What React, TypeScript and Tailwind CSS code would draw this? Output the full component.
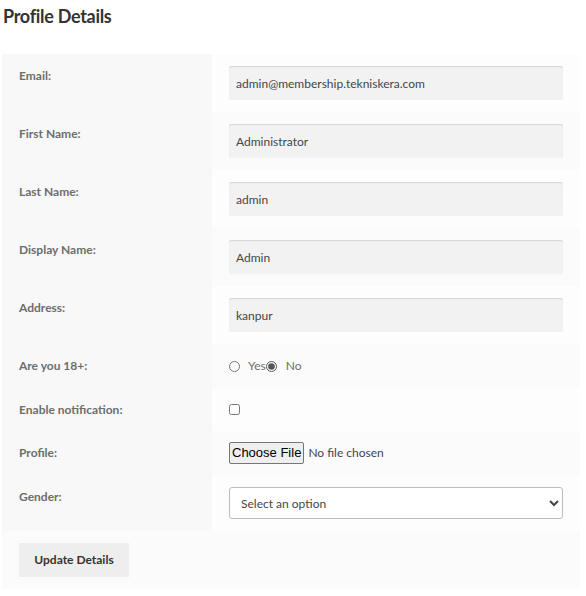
import React, { useState } from 'react';

const font = { fontFamily: 'Lato, "Noto Sans", sans-serif' };

interface Field {
  label: string;
  value: string;
}

const fields: Field[] = [
  { label: 'Email:', value: 'admin@membership.tekniskera.com' },
  { label: 'First Name:', value: 'Administrator' },
  { label: 'Last Name:', value: 'admin' },
  { label: 'Display Name:', value: 'Admin' },
  { label: 'Address:', value: 'kanpur' },
];

const thClass = 'w-[210px] bg-[#f8f8f8] px-[17px] py-[12px] text-left align-top font-bold leading-[19px] text-[#6d6d6d]';

const App: React.FC = () => {
  const [values, setValues] = useState(fields.map((f) => f.value));
  const [adult, setAdult] = useState('no');
  const [notify, setNotify] = useState(false);
  const [gender, setGender] = useState('');

  const tdBg = (i: number) => (i % 2 === 1 ? 'bg-[#fbfbfb]' : 'bg-[#fdfdfd]');

  return (
    <div className="min-h-screen bg-white pl-[2px] pr-[6px] text-[12px] text-[#43454b]" style={font}>
      <h2 className="ml-px pt-[4px] text-[18px] font-bold leading-[24px] tracking-[-0.3px] text-[#333]">Profile Details</h2>

      <form className="mt-[26px]" onSubmit={(e) => e.preventDefault()}>
        <table className="w-full border-collapse">
          <tbody>
            {fields.map((f, i) => (
              <tr key={f.label}>
                <th className={thClass}>{f.label}</th>
                <td className={`${tdBg(i)} px-[17px] py-[12px]`}>
                  <input
                    type="text"
                    value={values[i]}
                    onChange={(e) => {
                      const next = [...values];
                      next[i] = e.target.value;
                      setValues(next);
                    }}
                    className="block h-[34px] w-full rounded-[2px] bg-[#f2f2f2] px-[7px] text-[12px] text-[#43454b] shadow-[inset_0_1px_1px_rgba(0,0,0,0.125)] outline-none"
                  />
                </td>
              </tr>
            ))}

            <tr>
              <th className={thClass}>Are you 18+:</th>
              <td className={`${tdBg(5)} px-[17px] py-[12px]`}>
                <div className="flex h-[20px] items-center text-[#6d6d6d]">
                  <label className="flex items-center">
                    <input type="radio" name="adult" checked={adult === 'yes'} onChange={() => setAdult('yes')} className="m-0 h-[11px] w-[11px] accent-[#555]" />
                    <span className="ml-[8px]">Yes</span>
                  </label>
                  <label className="flex items-center">
                    <input type="radio" name="adult" checked={adult === 'no'} onChange={() => setAdult('no')} className="m-0 h-[11px] w-[11px] accent-[#555]" />
                    <span className="ml-[9px]">No</span>
                  </label>
                </div>
              </td>
            </tr>

            <tr>
              <th className={thClass}>Enable notification:</th>
              <td className={`${tdBg(6)} px-[17px] py-[12px]`}>
                <div className="flex h-[19px] items-center">
                  <input type="checkbox" checked={notify} onChange={(e) => setNotify(e.target.checked)} className="m-0 h-[11px] w-[11px] accent-[#555]" />
                </div>
              </td>
            </tr>

            <tr>
              <th className={thClass}>Profile:</th>
              <td className={`${tdBg(7)} px-[17px] py-[12px]`}>
                <div className="flex h-[20px] items-center">
                  <input
                    type="file"
                    className="text-[12px] text-[#43454b] file:mr-[4px] file:rounded-[2px] file:border file:border-[#767676] file:bg-[#efefef] file:px-[2px] file:py-0 file:text-[13px] file:text-black file:[font-family:Arial,'Liberation_Sans',sans-serif]"
                  />
                </div>
              </td>
            </tr>

            <tr>
              <th className={thClass}>Gender:</th>
              <td className={`${tdBg(8)} px-[17px] py-[12px]`}>
                <select
                  value={gender}
                  onChange={(e) => setGender(e.target.value)}
                  className="block h-[32px] w-full rounded-[3px] border border-[#bbb] bg-white pl-[7px] pr-[4px] text-[12px] text-[#43454b]"
                >
                  <option value="">Select an option</option>
                  <option value="male">Male</option>
                  <option value="female">Female</option>
                </select>
              </td>
            </tr>

            <tr>
              <td colSpan={2} className="bg-[#fbfbfb] px-[17px] py-[12px]">
                <button type="submit" className="h-[34px] w-[110px] bg-[#eeeeee] text-[12px] font-bold text-[#333]">
                  Update Details
                </button>
              </td>
            </tr>
          </tbody>
        </table>
      </form>
    </div>
  );
};

export default App;
